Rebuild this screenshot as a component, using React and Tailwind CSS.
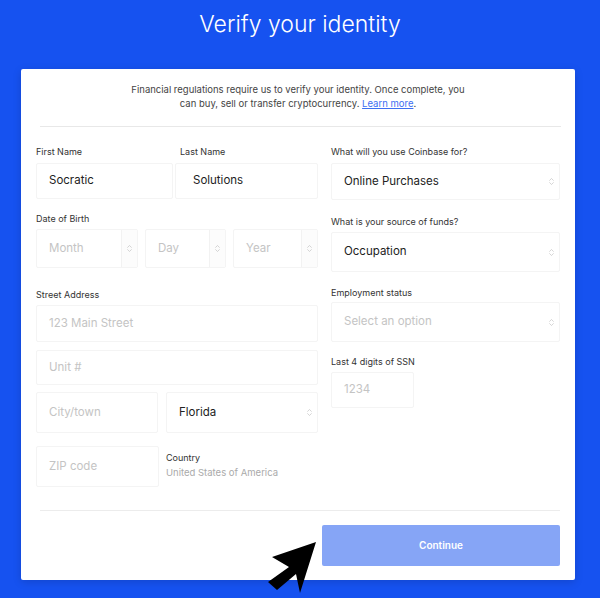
import { ChevronsUpDown } from 'lucide-react'

const font = { fontFamily: 'Inter, "Noto Sans", sans-serif' }

function Label({ children, className = '' }) {
  return <div className={`h-[14px] text-[9px] leading-[14px] text-[#333] ${className}`}>{children}</div>
}

function Field({ value, placeholder, className = '' }) {
  return (
    <div className={`flex items-center rounded-[2px] border border-[#f4f4f4] bg-white px-[12px] text-[11.5px] ${className}`}>
      {value ? <span className="text-[#222]">{value}</span> : <span className="text-[#c4c4c4]">{placeholder}</span>}
    </div>
  )
}

function Select({ value, placeholder, className = '', split = false }) {
  return (
    <div className={`flex items-stretch rounded-[2px] border border-[#f4f4f4] bg-white text-[11.5px] ${className}`}>
      <div className="flex flex-1 items-center px-[12px]">
        {value ? <span className="text-[#222]">{value}</span> : <span className="text-[#c4c4c4]">{placeholder}</span>}
      </div>
      <div className={`flex w-[16px] items-center justify-center ${split ? 'border-l border-[#f2f2f2] bg-[#fcfcfc]' : ''}`}>
        <ChevronsUpDown size={9} strokeWidth={1.5} className="text-[#b5b5b5]" />
      </div>
    </div>
  )
}

export default function App() {
  return (
    <div className="relative h-[598px] w-[600px] overflow-hidden bg-[#1652f0]" style={font}>
      {/* Title */}
      <h1 className="pt-[8px] text-center text-[23px] font-light leading-[32px] text-white">Verify your identity</h1>

      {/* Card */}
      <div className="ml-[21px] mt-[29px] h-[511px] w-[554px] rounded-[2px] bg-white shadow-[0_2px_8px_rgba(0,0,0,0.15)]">
        <p className="pt-[14px] text-center text-[9.5px] leading-[14px] text-[#444]">
          Financial regulations require us to verify your identity. Once complete, you
          <br />
          can buy, sell or transfer cryptocurrency.{' '}
          <span className="text-[#3d6ef2] underline">Learn more</span>.
        </p>
        <div className="ml-[19px] mr-[14px] mt-[15px] border-t border-[#e8e8e8]" />

        <div className="mt-[18px] flex gap-[13px] px-[15px]">
          {/* Left column */}
          <div className="w-[282px]">
            <div className="flex gap-[2px]">
              <div className="w-[137px]">
                <Label>First Name</Label>
                <Field value="Socratic" className="mt-[4px] h-[36px]" />
              </div>
              <div className="flex-1">
                <Label className="pl-[5px]">Last Name</Label>
                <Field value="Solutions" className="mt-[4px] h-[36px] pl-[17px]" />
              </div>
            </div>

            <Label className="mt-[13px]">Date of Birth</Label>
            <div className="mt-[3px] flex gap-[7px]">
              <Select placeholder="Month" split className="h-[39px] w-[102px]" />
              <Select placeholder="Day" split className="h-[39px] w-[81px]" />
              <Select placeholder="Year" split className="h-[39px] flex-1" />
            </div>

            <Label className="mt-[20px]">Street Address</Label>
            <Field placeholder="123 Main Street" className="mt-[3px] h-[37px]" />
            <Field placeholder="Unit #" className="mt-[8px] h-[35px]" />
            <div className="mt-[7px] flex gap-[8px]">
              <Field placeholder="City/town" className="h-[41px] w-[122px]" />
              <Select value="Florida" className="h-[41px] flex-1" />
            </div>
            <div className="mt-[13px] flex gap-[7px]">
              <Field placeholder="ZIP code" className="h-[41px] w-[123px]" />
              <div className="pt-[5px]">
                <div className="text-[9px] leading-[14px] text-[#333]">Country</div>
                <div className="text-[9.5px] leading-[16px] text-[#aaa]">United States of America</div>
              </div>
            </div>
          </div>

          {/* Right column */}
          <div className="w-[229px]">
            <Label>What will you use Coinbase for?</Label>
            <Select value="Online Purchases" className="mt-[4px] h-[37px]" />

            <Label className="mt-[15px]">What is your source of funds?</Label>
            <Select value="Occupation" className="mt-[3px] h-[40px]" />

            <Label className="mt-[14px]">Employment status</Label>
            <Select placeholder="Select an option" className="mt-[2px] h-[40px]" />

            <Label className="mt-[13px]">Last 4 digits of SSN</Label>
            <Field placeholder="1234" className="mt-[3px] h-[36px] w-[83px]" />
          </div>
        </div>

        <div className="ml-[19px] mr-[15px] mt-[23px] border-t border-[#ececec]" />
        <div className="mt-[14px] flex justify-end pr-[15px]">
          <button className="h-[41px] w-[238px] rounded-[2px] bg-[#86a5f6] text-[10px] font-semibold text-white">
            Continue
          </button>
        </div>
      </div>

      {/* Pointer arrow overlay */}
      <svg className="absolute left-0 top-0" width="600" height="598" viewBox="0 0 600 598">
        <polygon
          points="316,542 272,557 289,567 268,582 277,590 296,574 300,593"
          fill="#000"
        />
      </svg>
    </div>
  )
}
